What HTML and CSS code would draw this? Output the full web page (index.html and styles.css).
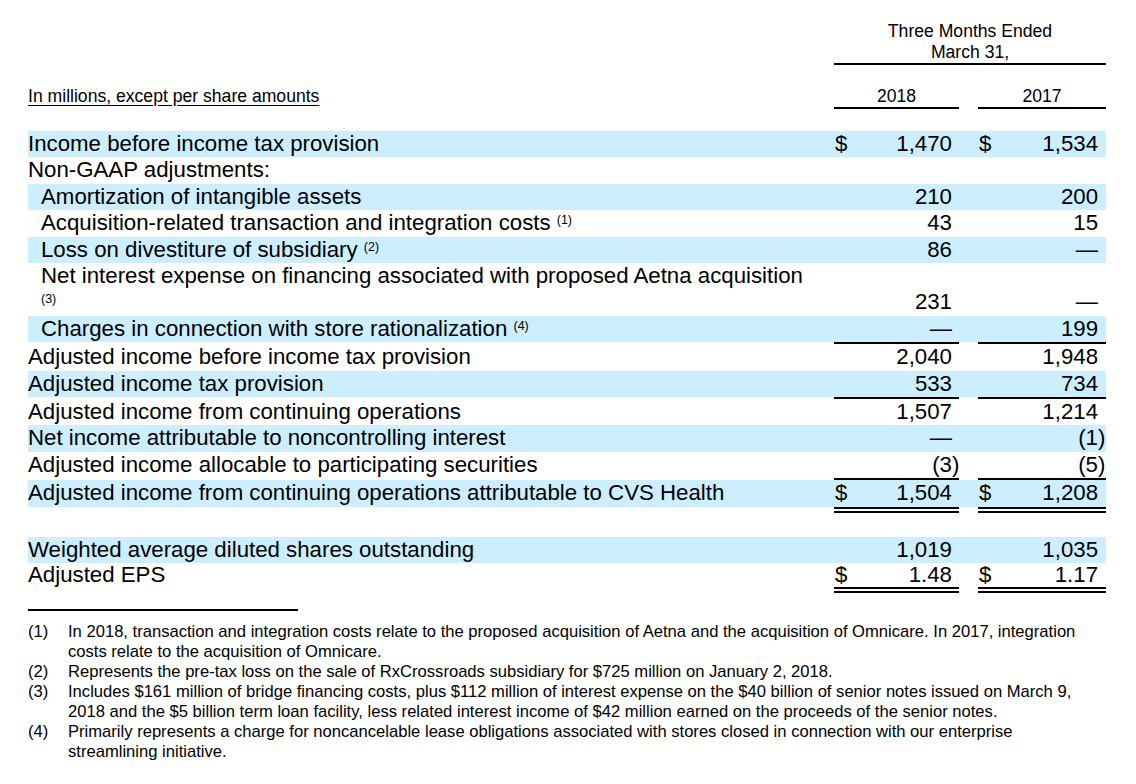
FILE: index.html
```html
<!DOCTYPE html>
<html lang="en">
<head>
<meta charset="utf-8">
<title>Adjusted EPS reconciliation</title>
<link rel="stylesheet" href="styles.css">
</head>
<body>
<div class="page">
  <table class="fin">
    <colgroup>
      <col class="c-label"><col class="c-cur1"><col class="c-val1"><col class="c-gap"><col class="c-cur2"><col class="c-val2">
    </colgroup>
    <thead>
      <tr class="h1">
        <td></td>
        <td colspan="5" class="period">Three Months Ended<br>March 31,</td>
      </tr>
      <tr class="h2">
        <td class="units"><span>In millions, except per share amounts</span></td>
        <td colspan="2" class="yr">2018</td>
        <td></td>
        <td colspan="2" class="yr">2017</td>
      </tr>
    </thead>
    <tbody>
      <tr class="gap"><td colspan="6"><div class="sp22"></div></td></tr>
      <tr class="b">
        <td class="l">Income before income tax provision</td>
        <td class="c">$</td><td class="n">1,470</td><td></td><td class="c">$</td><td class="n n2">1,534</td>
      </tr>
      <tr>
        <td class="l">Non-GAAP adjustments:</td>
        <td class="c"></td><td class="n"></td><td></td><td class="c"></td><td class="n n2"></td>
      </tr>
      <tr class="b">
        <td class="l ind">Amortization of intangible assets</td>
        <td class="c"></td><td class="n">210</td><td></td><td class="c"></td><td class="n n2">200</td>
      </tr>
      <tr>
        <td class="l ind">Acquisition-related transaction and integration costs <sup>(1)</sup></td>
        <td class="c"></td><td class="n">43</td><td></td><td class="c"></td><td class="n n2">15</td>
      </tr>
      <tr class="b">
        <td class="l ind">Loss on divestiture of subsidiary <sup>(2)</sup></td>
        <td class="c"></td><td class="n">86</td><td></td><td class="c"></td><td class="n n2">—</td>
      </tr>
      <tr>
        <td class="l ind">Net interest expense on financing associated with proposed Aetna acquisition <sup>(3)</sup></td>
        <td class="c"></td><td class="n">231</td><td></td><td class="c"></td><td class="n n2">—</td>
      </tr>
      <tr class="b">
        <td class="l ind">Charges in connection with store rationalization <sup>(4)</sup></td>
        <td class="c"></td><td class="n">—</td><td></td><td class="c"></td><td class="n n2">199</td>
      </tr>
      <tr class="tt">
        <td class="l">Adjusted income before income tax provision</td>
        <td class="c"></td><td class="n">2,040</td><td></td><td class="c"></td><td class="n n2">1,948</td>
      </tr>
      <tr class="b">
        <td class="l">Adjusted income tax provision</td>
        <td class="c"></td><td class="n">533</td><td></td><td class="c"></td><td class="n n2">734</td>
      </tr>
      <tr class="tt">
        <td class="l">Adjusted income from continuing operations</td>
        <td class="c"></td><td class="n">1,507</td><td></td><td class="c"></td><td class="n n2">1,214</td>
      </tr>
      <tr class="b">
        <td class="l">Net income attributable to noncontrolling interest</td>
        <td class="c"></td><td class="n">—</td><td></td><td class="c"></td><td class="n n2">(1<span class="cp">)</span></td>
      </tr>
      <tr class="bb">
        <td class="l">Adjusted income allocable to participating securities</td>
        <td class="c"></td><td class="n">(3<span class="cp">)</span></td><td></td><td class="c"></td><td class="n n2">(5<span class="cp">)</span></td>
      </tr>
      <tr class="b">
        <td class="l">Adjusted income from continuing operations attributable to CVS Health</td>
        <td class="c">$</td><td class="n">1,504</td><td></td><td class="c">$</td><td class="n n2">1,208</td>
      </tr>
      <tr class="gap dt">
        <td><div class="sp30"></div></td>
        <td class="c"></td><td class="n"></td><td></td><td class="c"></td><td class="n n2"></td>
      </tr>
      <tr class="b">
        <td class="l">Weighted average diluted shares outstanding</td>
        <td class="c"></td><td class="n">1,019</td><td></td><td class="c"></td><td class="n n2">1,035</td>
      </tr>
      <tr class="db eps">
        <td class="l">Adjusted EPS</td>
        <td class="c">$</td><td class="n">1.48</td><td></td><td class="c">$</td><td class="n n2">1.17</td>
      </tr>
    </tbody>
  </table>

  <div class="notes">
    <div class="rule"></div>
    <ol class="fns">
      <li><span class="fn-no">(1)</span><span class="fn-tx">In 2018, transaction and integration costs relate to the proposed acquisition of Aetna and the acquisition of Omnicare. In 2017, integration costs relate to the acquisition of Omnicare.</span></li>
      <li><span class="fn-no">(2)</span><span class="fn-tx">Represents the pre-tax loss on the sale of RxCrossroads subsidiary for $725 million on January 2, 2018.</span></li>
      <li><span class="fn-no">(3)</span><span class="fn-tx">Includes $161 million of bridge financing costs, plus $112 million of interest expense on the $40 billion of senior notes issued on March 9, 2018 and the $5 billion term loan facility, less related interest income of $42 million earned on the proceeds of the senior notes.</span></li>
      <li><span class="fn-no">(4)</span><span class="fn-tx">Primarily represents a charge for noncancelable lease obligations associated with stores closed in connection with our enterprise streamlining initiative.</span></li>
    </ol>
  </div>
</div>
</body>
</html>
```

FILE: styles.css
```css
html, body {
  margin: 0;
  padding: 0;
  background: #ffffff;
}

body {
  font-family: "Liberation Sans", Arial, Helvetica, sans-serif;
  color: #000000;
}

.page {
  padding-left: 28px;
  width: 1078px;
}

.fin {
  margin-top: 21px;
  width: 1078px;
  table-layout: fixed;
  border-collapse: separate;
  border-spacing: 0;
}

.c-label { width: 806px; }
.c-cur1 { width: 20px; }
.c-val1 { width: 105px; }
.c-gap { width: 19px; }
.c-cur2 { width: 20px; }
.c-val2 { width: 108px; }

.fin td {
  padding: 0;
  vertical-align: bottom;
  font-size: 22.25px;
  line-height: 26.4px;
  white-space: nowrap;
}

.fin td.l {
  white-space: normal;
  padding-right: 20px;
}

.fin td.ind {
  padding-left: 13px;
}

/* header */
.fin thead td {
  font-size: 17.6px;
  line-height: 21px;
}

.fin .period {
  text-align: center;
  border-bottom: 2px solid #000;
}

.fin .h2 td {
  padding-top: 21px;
}

.fin .h2 .units {
  padding-bottom: 2px;
}

.fin .h2 .units span {
  text-decoration: underline;
  text-underline-offset: 3px;
}

.fin .yr {
  text-align: center;
  border-bottom: 2px solid #000;
}

/* spacers */
.fin tr.gap td {
  line-height: 0;
  font-size: 0;
}

.sp22 { height: 22px; }
.sp30 { height: 30px; }

/* body cells */
.fin td.c {
  padding-left: 1px;
  text-align: left;
}

.fin td.n {
  text-align: right;
  padding-right: 7px;
}

.fin td.n2 {
  padding-right: 8px;
}

.cp {
  margin-right: -0.333em;
}

.fin tr.b td {
  background: #cceeff;
}

.fin tr.tt td.c,
.fin tr.tt td.n {
  border-top: 2px solid #000;
}

.fin tr.bb td.c,
.fin tr.bb td.n {
  border-bottom: 2px solid #000;
}

.fin tr.bb td.l {
  padding-bottom: 2px;
}

.fin tr.dt td.c,
.fin tr.dt td.n {
  border-top: 6px double #000;
}

.fin tr.db td.c,
.fin tr.db td.n {
  border-bottom: 6px double #000;
}

.fin tr.db td.l {
  padding-bottom: 6px;
}

.fin tr.eps td {
  line-height: 24px;
}

sup {
  font-size: 12.5px;
  line-height: 0;
  vertical-align: 6px;
}

/* footnotes */
.notes {
  width: 1078px;
}

.rule {
  margin-top: 16px;
  width: 270px;
  height: 2px;
  background: #000;
}

.fns {
  list-style: none;
  margin: 11px 0 0 0;
  padding: 0;
  font-size: 16.6px;
  line-height: 20px;
}

.fns li {
  display: grid;
  grid-template-columns: 40px 1020px;
}
```
